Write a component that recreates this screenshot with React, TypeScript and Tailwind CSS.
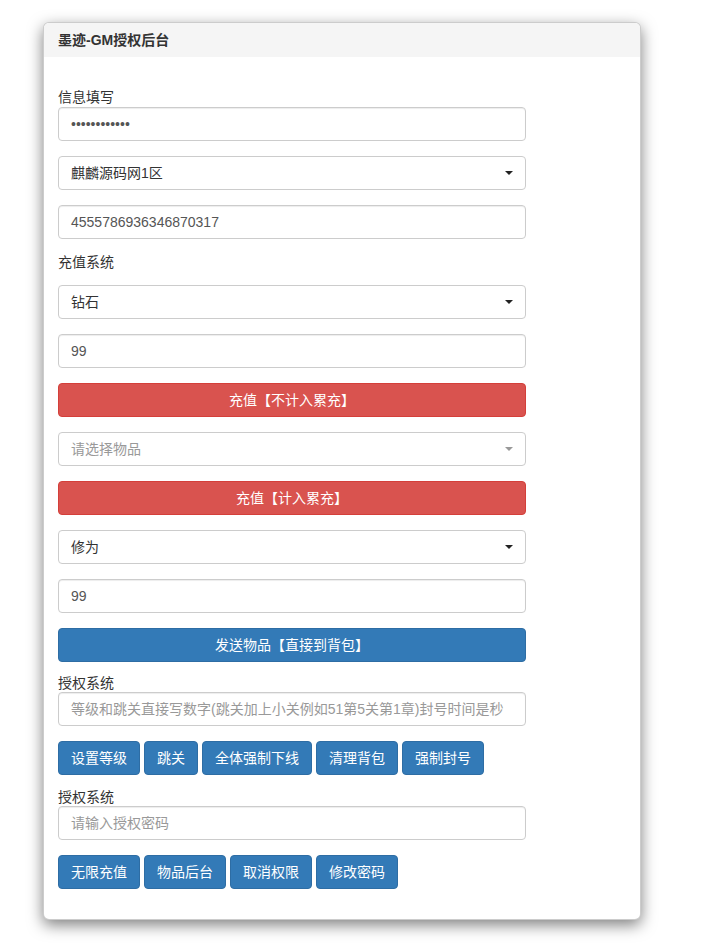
import React from "react"

const font = { fontFamily: '"Liberation Sans", "Noto Sans CJK SC", sans-serif' }

function Field({ children, muted }: { children: React.ReactNode; muted?: boolean }) {
  return (
    <div
      className={`h-[34px] w-[468px] px-3 flex items-center border border-[#ccc] rounded-[4px] bg-white text-sm whitespace-nowrap overflow-hidden shadow-[inset_0_1px_1px_rgba(0,0,0,0.075)] ${
        muted ? "text-[#999]" : "text-[#555]"
      }`}
    >
      {children}
    </div>
  )
}

function SelectBox({ label, muted }: { label: string; muted?: boolean }) {
  return (
    <div
      className={`h-[34px] w-[468px] pl-3 pr-[12px] flex items-center justify-between border border-[#ccc] rounded-[4px] bg-white text-sm ${
        muted ? "text-[#999]" : "text-[#333]"
      }`}
    >
      <span>{label}</span>
      <span
        className={`w-0 h-0 border-l-[4px] border-r-[4px] border-t-[4px] border-l-transparent border-r-transparent ${
          muted ? "border-t-[#999]" : "border-t-[#222]"
        }`}
      />
    </div>
  )
}

function WideButton({ children, color }: { children: React.ReactNode; color: "red" | "blue" }) {
  const cls =
    color === "red"
      ? "bg-[#d9534f] border-[#d43f3a]"
      : "bg-[#337ab7] border-[#2e6da4]"
  return (
    <div
      className={`h-[34px] w-[468px] flex items-center justify-center rounded-[4px] border text-sm text-white ${cls}`}
    >
      {children}
    </div>
  )
}

function SmallButton({ children }: { children: React.ReactNode }) {
  return (
    <div className="h-[34px] px-3 flex items-center rounded-[4px] border border-[#2e6da4] bg-[#337ab7] text-sm text-white whitespace-nowrap">
      {children}
    </div>
  )
}

export default function App() {
  return (
    <div className="min-h-[952px] bg-white pt-[22px] pl-[43px]" style={font}>
      <div className="w-[598px] bg-white border border-[rgba(0,0,0,0.2)] rounded-[6px] shadow-[0_5px_15px_rgba(0,0,0,0.5)] overflow-hidden">
        {/* header */}
        <div className="h-[34px] bg-[#f5f5f5] px-[14px] flex items-center text-sm font-bold text-[#333]">
          墨迹-GM授权后台
        </div>

        <div className="px-[14px] pt-[30px] pb-[30px] text-[#333]">
          <div className="h-[20px] leading-[20px] text-sm">信息填写</div>
          <div className="flex flex-col gap-[15px]">
            <Field>
              <span className="text-[#555]">••••••••••••</span>
            </Field>
            <SelectBox label="麒麟源码网1区" />
            <Field>4555786936346870317</Field>
          </div>

          <div className="mt-[13px] mb-[13px] h-[20px] leading-[20px] text-sm">充值系统</div>
          <div className="flex flex-col gap-[15px]">
            <SelectBox label="钻石" />
            <Field>99</Field>
            <WideButton color="red">充值【不计入累充】</WideButton>
            <SelectBox label="请选择物品" muted />
            <WideButton color="red">充值【计入累充】</WideButton>
            <SelectBox label="修为" />
            <Field>99</Field>
            <WideButton color="blue">发送物品【直接到背包】</WideButton>
          </div>

          <div className="mt-[12px] h-[18px] leading-[18px] text-sm">授权系统</div>
          <Field muted>等级和跳关直接写数字(跳关加上小关例如51第5关第1章)封号时间是秒</Field>
          <div className="mt-[15px] flex gap-[4px]">
            <SmallButton>设置等级</SmallButton>
            <SmallButton>跳关</SmallButton>
            <SmallButton>全体强制下线</SmallButton>
            <SmallButton>清理背包</SmallButton>
            <SmallButton>强制封号</SmallButton>
          </div>

          <div className="mt-[13px] h-[18px] leading-[18px] text-sm">授权系统</div>
          <Field muted>请输入授权密码</Field>
          <div className="mt-[15px] flex gap-[4px]">
            <SmallButton>无限充值</SmallButton>
            <SmallButton>物品后台</SmallButton>
            <SmallButton>取消权限</SmallButton>
            <SmallButton>修改密码</SmallButton>
          </div>
        </div>
      </div>
    </div>
  )
}
